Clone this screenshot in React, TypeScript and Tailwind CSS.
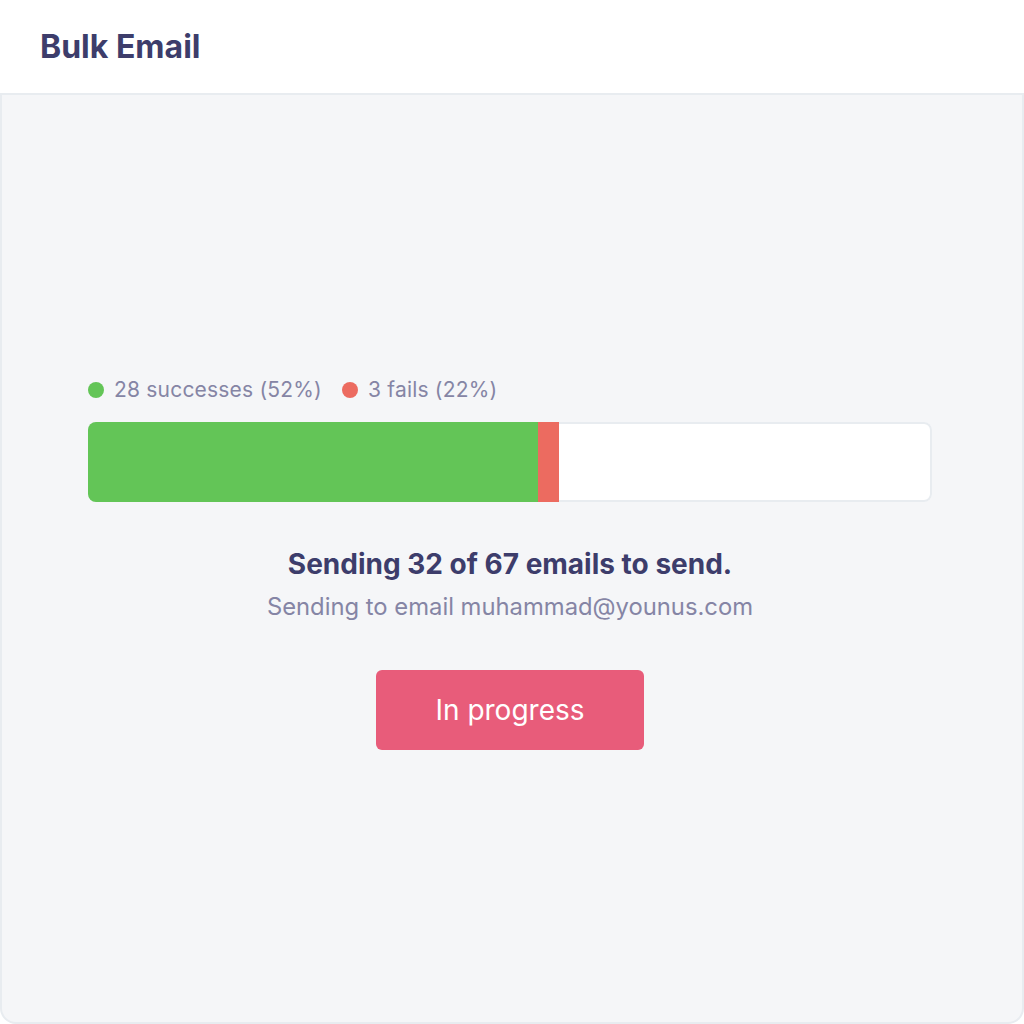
export default function App() {
  const total = 67
  const sent = 32
  const successPct = 53.3
  const failPct = 2.5

  return (
    <div className="h-screen w-full flex flex-col bg-white" style={{ fontFamily: "Inter, 'Noto Sans', sans-serif" }}>
      {/* Header */}
      <header className="h-[95px] shrink-0 flex items-center px-10 border-b-2 border-[#e8ecf0]">
        <h1 className="text-[32px] leading-[40px] font-bold text-[#3d3d6b]">Bulk Email</h1>
      </header>

      {/* Body */}
      <main className="flex-1 bg-[#f5f6f8] border-x-2 border-b-2 border-[#e8ecf0] rounded-b-2xl flex flex-col pt-[281px]">
        <div className="flex flex-col pl-[86px] pr-[90px]">
          <div className="flex items-center gap-[20px] text-[21px] leading-[28px] tracking-[0.2px] text-[#8585a5]">
            <div className="flex items-center gap-[10px]">
              <span className="w-4 h-4 rounded-full bg-[#63c557]" />
              <span>28 successes (52%)</span>
            </div>
            <div className="flex items-center gap-[10px]">
              <span className="w-4 h-4 rounded-full bg-[#ec6b60]" />
              <span>3 fails (22%)</span>
            </div>
          </div>

          <div className="mt-[18px] h-[80px] flex bg-white rounded-lg overflow-hidden shadow-[inset_0_0_0_2px_#e8ecf0]">
            <div className="h-full bg-[#63c557]" style={{ width: `${successPct}%` }} />
            <div className="h-full bg-[#ec6b60]" style={{ width: `${failPct}%` }} />
          </div>
        </div>

        <div className="flex flex-col items-center pr-[4px]">
          <p className="mt-[45px] text-[28px] leading-[34px] font-bold text-[#3d3d6b]">
            Sending {sent} of {total} emails to send.
          </p>
          <p className="mt-[11px] text-[23.8px] leading-[30px] text-[#8585a5]">Sending to email muhammad@younus.com</p>
          <button className="mt-[48px] w-[268px] h-[80px] rounded-md bg-[#e85c7a] text-white text-[28px]">
            In progress
          </button>
        </div>
      </main>
    </div>
  )
}
